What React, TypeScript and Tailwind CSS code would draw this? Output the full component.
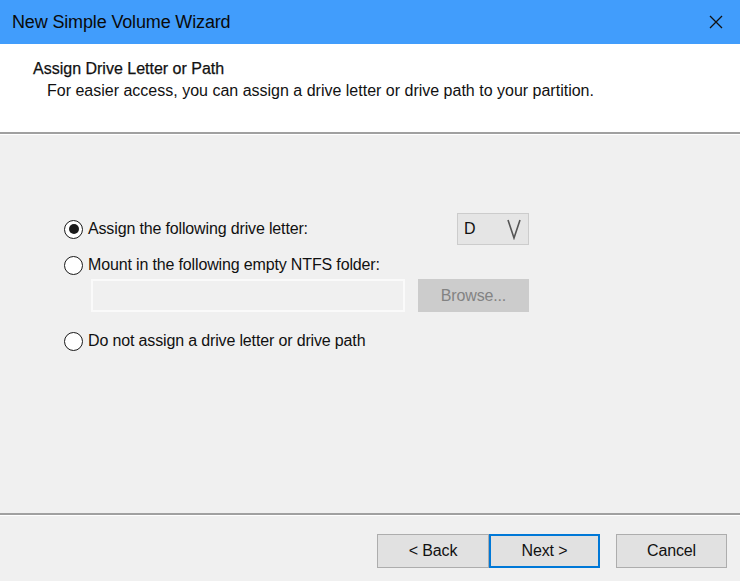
import React, { useState } from "react";

function Radio({ checked }: { checked: boolean }) {
  return (
    <span className="flex h-[19px] w-[19px] shrink-0 items-center justify-center rounded-full border-[1.5px] border-[#1a1a1a] bg-white">
      {checked && <span className="h-[10px] w-[10px] rounded-full bg-[#1a1a1a]" />}
    </span>
  );
}

export default function App() {
  const [choice, setChoice] = useState("letter");

  return (
    <div className="flex h-[581px] w-[740px] flex-col bg-[#f0f0f0] font-['Liberation_Sans',Arial,sans-serif] text-[#111]">
      {/* title bar */}
      <div className="flex h-[44px] shrink-0 items-center justify-between bg-[#419dfc] pl-[12px] pr-[16px]">
        <span className="text-[18px] tracking-[-0.15px] text-[#0a0a0a]">New Simple Volume Wizard</span>
        <svg width="16" height="16" viewBox="0 0 16 16" className="text-[#111]">
          <path d="M2 2 L14 14 M14 2 L2 14" stroke="currentColor" strokeWidth="1.3" />
        </svg>
      </div>

      {/* header */}
      <div className="h-[88px] shrink-0 bg-white pl-[33px] pt-[15px]">
        <div className="text-[16px] font-medium leading-[20px] [-webkit-text-stroke:0.25px_#111]">Assign Drive Letter or Path</div>
        <div className="mt-[2px] pl-[14px] text-[16px] leading-[20px]">
          For easier access, you can assign a drive letter or drive path to your partition.
        </div>
      </div>
      <div className="h-[2px] shrink-0 bg-[#a0a0a0]" />
      <div className="h-px shrink-0 bg-white" />

      {/* body */}
      <div className="flex-1 pl-[64px] pr-[211px] pt-[78px] text-[16px] tracking-[-0.15px]">
        <div className="flex items-center justify-between">
          <button className="flex items-center gap-[5px]" onClick={() => setChoice("letter")}>
            <Radio checked={choice === "letter"} />
            <span>Assign the following drive letter:</span>
          </button>
          <div className="flex h-[32px] w-[72px] items-center justify-between border border-[#cccccc] bg-[#e5e5e5] pl-[6px] pr-[6px]">
            <span>D</span>
            <svg width="16" height="22" viewBox="0 0 16 22">
              <path d="M2 2 L8 20 L14 2" stroke="#555" strokeWidth="1.6" fill="none" />
            </svg>
          </div>
        </div>

        <button className="mt-[8px] flex items-center gap-[5px]" onClick={() => setChoice("folder")}>
          <Radio checked={choice === "folder"} />
          <span>Mount in the following empty NTFS folder:</span>
        </button>

        <div className="mt-[2px] flex items-center justify-between pl-[27px]">
          <div className="h-[33px] w-[314px] border-2 border-[#fafafa] bg-[#f0f0f0]" />
          <div className="flex h-[33px] w-[111px] items-center justify-center border border-[#cccccc] bg-[#cccccc] text-[#838383]">
            Browse...
          </div>
        </div>

        <button className="mt-[17px] flex items-center gap-[5px]" onClick={() => setChoice("none")}>
          <Radio checked={choice === "none"} />
          <span>Do not assign a drive letter or drive path</span>
        </button>
      </div>

      {/* footer */}
      <div className="h-[2px] shrink-0 bg-[#a0a0a0]" />
      <div className="h-px shrink-0 bg-white" />
      <div className="flex h-[65px] shrink-0 items-start justify-end pr-[13px] pt-[18px] text-[16px] tracking-[-0.15px]">
        <button className="h-[34px] w-[112px] border border-[#adadad] bg-[#e1e1e1]">&lt; Back</button>
        <button className="h-[34px] w-[111px] border-2 border-[#0078d7] bg-[#e1e1e1]">Next &gt;</button>
        <button className="ml-[16px] h-[34px] w-[111px] border border-[#adadad] bg-[#e1e1e1]">Cancel</button>
      </div>
    </div>
  );
}
